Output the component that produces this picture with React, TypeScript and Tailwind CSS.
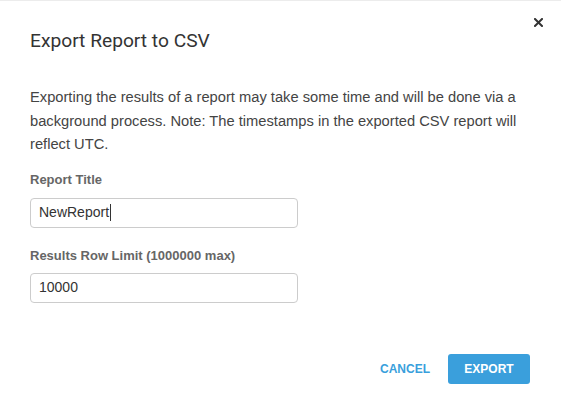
import React from "react";

export default function App() {
  return (
    <div className="w-[561px] h-[414px] bg-white border-t border-[#ececec] relative text-[#333] font-['Liberation_Sans',Arial,sans-serif]">
      <button className="absolute right-[16px] top-[14px] w-[14px] h-[14px] flex items-center justify-center">
        <svg width="9" height="9" viewBox="0 0 9 9">
          <path d="M1 1 L8 8 M8 1 L1 8" stroke="#333" strokeWidth="2" strokeLinecap="square" />
        </svg>
      </button>
      <div className="pl-[30px] pr-[30px] pt-[26px] flex flex-col">
        <h2 className="text-[19.2px] leading-[28px] text-[#333] font-['Roboto','Liberation_Sans',sans-serif]">
          Export Report to CSV
        </h2>
        <p className="mt-[31px] text-[14.7px] leading-[23.5px] text-[#444] w-[500px]">
          Exporting the results of a report may take some time and will be done via a background
          process. Note: The timestamps in the exported CSV report will reflect UTC.
        </p>
        <label className="mt-[14px] text-[13px] leading-[18px] font-bold text-[#666]">Report Title</label>
        <div className="mt-[9px] w-[268px] h-[30px] border border-[#ccc] rounded-[4px] flex items-center px-[8px] text-[14px] text-[#333]">
          NewReport<span className="inline-block w-px h-[17px] bg-[#333] ml-px" />
        </div>
        <label className="mt-[19px] text-[13px] leading-[18px] font-bold text-[#666]">
          Results Row Limit (1000000 max)
        </label>
        <div className="mt-[8px] w-[268px] h-[30px] border border-[#ccc] rounded-[4px] flex items-center px-[8px] text-[14px] text-[#333]">
          10000
        </div>
        <div className="mt-[51px] flex justify-end items-center gap-[18px] pr-[1px]">
          <button className="text-[12px] font-bold text-[#3a9fdc]">CANCEL</button>
          <button className="w-[82px] h-[30px] bg-[#3a9fdc] rounded-[3px] text-white text-[12px] font-bold">
            EXPORT
          </button>
        </div>
      </div>
    </div>
  );
}
